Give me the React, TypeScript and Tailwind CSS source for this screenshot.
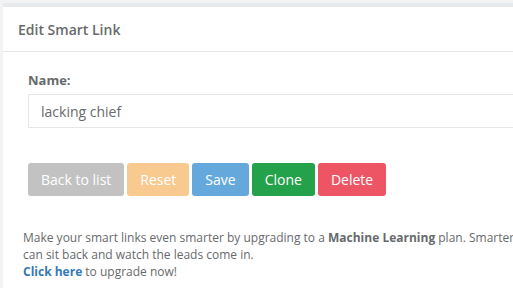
export default function App() {
  const font = { fontFamily: '"Open Sans", "Noto Sans", sans-serif' }
  return (
    <div className="w-[513px] h-[288px] overflow-hidden bg-[#f3f3f4] pt-[3px] pl-[3px]" style={font}>
      <div className="w-[800px] bg-white border-t-[4px] border-[#e7eaec] h-[400px]">
        {/* Header */}
        <div className="h-[45px] px-[15px] flex items-center border-b border-[#e7eaec]">
          <h5 className="text-[14px] font-semibold text-[#676a6c]">Edit Smart Link</h5>
        </div>

        {/* Body */}
        <div className="pt-[19px] pl-[20px]">
          <div className="pl-[5px]">
            <label className="block text-[13px] font-bold text-[#676a6c] leading-[18px] mb-[5px]">Name:</label>
            <input
              defaultValue="lacking chief"
              className="w-[700px] h-[34px] border border-[#e5e6e7] px-[12px] text-[14px] text-[#676a6c] outline-none"
            />
            <div className="flex gap-[3px] mt-[35px]">
              <button className="h-[33px] px-[13px] rounded-[3px] bg-[#c2c2c2] text-white text-[14px]">Back to list</button>
              <button className="h-[33px] px-[13px] rounded-[3px] bg-[#f8ca90] text-white text-[14px]">Reset</button>
              <button className="h-[33px] px-[13px] rounded-[3px] bg-[#65a9dc] text-white text-[14px]">Save</button>
              <button className="h-[33px] px-[13px] rounded-[3px] bg-[#23a14b] text-white text-[14px]">Clone</button>
              <button className="h-[33px] px-[13px] rounded-[3px] bg-[#ed5565] text-white text-[14px]">Delete</button>
            </div>
          </div>
          <p className="mt-[33px] w-[555px] text-[12px] leading-[17px] text-[#676a6c]">
            Make your smart links even smarter by upgrading to a <b>Machine Learning</b> plan. Smarter marketers
            can sit back and watch the leads come in.
            <br />
            <a className="font-bold text-[#337ab7]">Click here</a> to upgrade now!
          </p>
        </div>
      </div>
    </div>
  )
}
